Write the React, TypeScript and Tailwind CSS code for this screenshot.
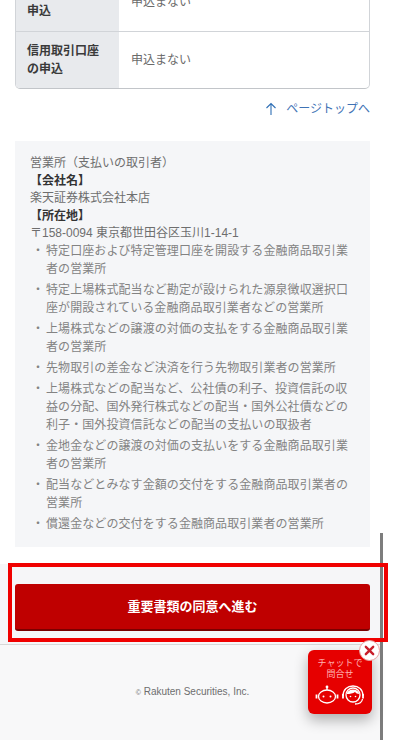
const items = [
  "特定口座および特定管理口座を開設する金融商品取引業者の営業所",
  "特定上場株式配当など勘定が設けられた源泉徴収選択口座が開設されている金融商品取引業者などの営業所",
  "上場株式などの譲渡の対価の支払をする金融商品取引業者の営業所",
  "先物取引の差金など決済を行う先物取引業者の営業所",
  "上場株式などの配当など、公社債の利子、投資信託の収益の分配、国外発行株式などの配当・国外公社債などの利子・国外投資信託などの配当の支払いの取扱者",
  "金地金などの譲渡の対価の支払いをする金融商品取引業者の営業所",
  "配当などとみなす金額の交付をする金融商品取引業者の営業所",
  "償還金などの交付をする金融商品取引業者の営業所",
];

function Row({ head, value, last }: { head: string[]; value: string; last?: boolean }) {
  return (
    <div className={last ? "flex h-[56px]" : "flex h-[60px] border-b border-[#d1d4d8]"}>
      <div className="flex w-[103px] shrink-0 flex-col justify-center bg-[#e8eaed] pl-[11px] text-[12px] font-bold leading-[18px] text-[#3a3a3a]">
        {head.map((h) => (
          <span key={h}>{h}</span>
        ))}
      </div>
      <div className="flex flex-1 items-center pl-[12px] text-[12px] text-[#6a6a6a]">{value}</div>
    </div>
  );
}

function ChatWidget() {
  return (
    <div className="absolute left-[308px] top-[650px] flex h-[64px] w-[64px] flex-col items-center rounded-[6px] bg-[#e60000] pt-[8px] shadow-[0_6px_14px_rgba(0,0,0,0.3)]">
      <span className="text-[9px] leading-[11px] text-[#ffb3b3]">チャットで</span>
      <span className="text-[9px] leading-[11px] text-[#ffb3b3]">問合せ</span>
      <svg viewBox="0 0 50 22" className="mt-[4px] h-[22px] w-[50px]" fill="none" stroke="#fff" strokeWidth="1.3">
        {/* robot */}
        <ellipse cx="12" cy="12.5" rx="8.5" ry="6.5" />
        <circle cx="12" cy="3" r="1.4" fill="#fff" stroke="none" />
        <path d="M12 4v2" />
        <path d="M1.5 10.5v4M22.5 10.5v4" strokeWidth="1.8" />
        <circle cx="8.5" cy="12.5" r="1" fill="#fff" stroke="none" />
        <circle cx="15.5" cy="12.5" r="1" fill="#fff" stroke="none" />
        {/* operator */}
        <circle cx="38" cy="11" r="7" />
        <path d="M31.5 10c1-3 3-4.5 6.5-4.5s5.500 1.500 6.500 4.500c-2.500 0-3.500-1-4.500-2-2 1.500-5 2-8.500 2z" fill="#fff" stroke="none" />
        <path d="M28 12c0-6.500 4.500-10 10-10s10 3.500 10 10" />
        <path d="M28 10v4.500M48 10v4.500" strokeWidth="1.8" />
        <path d="M47.500 15c-.5 3.500-4 5-7.500 5" />
        <circle cx="35.500" cy="12.500" r="0.8" fill="#fff" stroke="none" />
        <circle cx="40.500" cy="12.500" r="0.8" fill="#fff" stroke="none" />
      </svg>
      <div className="absolute -right-[8px] -top-[10px] flex h-[21px] w-[21px] items-center justify-center rounded-full border border-[#e9a0a0] bg-white">
        <svg viewBox="0 0 12 12" className="h-[11px] w-[11px]" stroke="#c81e2a" strokeWidth="2.6" strokeLinecap="round">
          <path d="M2 2l8 8M10 2l-8 8" />
        </svg>
      </div>
    </div>
  );
}

export default function App() {
  return (
    <div
      className="relative h-[740px] w-[400px] overflow-hidden bg-white"
      style={{ fontFamily: '"Liberation Sans", "Noto Sans CJK JP", sans-serif' }}
    >
      <div className="pl-[15px] pr-[30px]">
        {/* table top is scrolled out of the window */}
        <div className="-mt-[29px] overflow-hidden rounded-b-[5px] border border-[#d1d4d8] border-b-[#c2c5c9]">
          <Row head={["口座開設の", "申込"]} value="申込まない" />
          <Row head={["信用取引口座", "の申込"]} value="申込まない" last />
        </div>

        <a className="mt-[11px] flex items-center justify-end text-[12px] leading-[18px] text-[#3f73b5]">
          <svg viewBox="0 0 14 14" className="mr-[8px] h-[14px] w-[14px]" fill="none" stroke="#2f6fb5" strokeWidth="1.1">
            <path d="M7 13V1.500M2.500 6L7 1.500 11.500 6" />
          </svg>
          ページトップへ
        </a>

        <div className="mt-[23px] h-[406px] bg-[#f5f6f8] pl-[15px] pr-[20px] pt-[14px] text-[12px] leading-[17.5px] text-[#6e6e6e]">
          <p>営業所（支払いの取引者）</p>
          <p className="font-bold text-[#333]">【会社名】</p>
          <p>楽天証券株式会社本店</p>
          <p className="font-bold text-[#333]">【所在地】</p>
          <p>〒158-0094 東京都世田谷区玉川1-14-1</p>
          <ul className="-mt-[1px] flex flex-col gap-[3px] text-[#838383]">
            {items.map((t) => (
              <li key={t} className="flex leading-[18px] tracking-[0.08px]">
                <span className="w-[16px] shrink-0 pl-[2px]">・</span>
                <span>{t}</span>
              </li>
            ))}
          </ul>
        </div>
      </div>

      <div className="mt-[17px] h-[80px] w-[380px] bg-[#f6f6f8] pl-[15px] pr-[10px] pt-[20px]">
        <button className="h-[47px] w-full rounded-[3px] border-b-2 border-[#7a0000] bg-[#bf0000] text-[13px] font-bold text-white">
          重要書類の同意へ進む
        </button>
      </div>

      <footer className="h-[98px] w-[380px] border-t border-[#d8d8d8] bg-[#f8f8f9] pl-[5px] pt-[39px] text-center text-[10px] leading-[16px] text-[#6e6e6e]">
        <span className="text-[7px]">©</span> Rakuten Securities, Inc.
      </footer>

      {/* scrollbar */}
      <div className="absolute left-[380px] top-[533px] h-[207px] w-[3px] bg-[#7d7d7d]" />
      {/* annotation frame drawn over the shot */}
      <div className="pointer-events-none absolute left-[8px] top-[563px] h-[79px] w-[380px] border-[4px] border-[#f00000]" />
      <ChatWidget />
    </div>
  );
}
